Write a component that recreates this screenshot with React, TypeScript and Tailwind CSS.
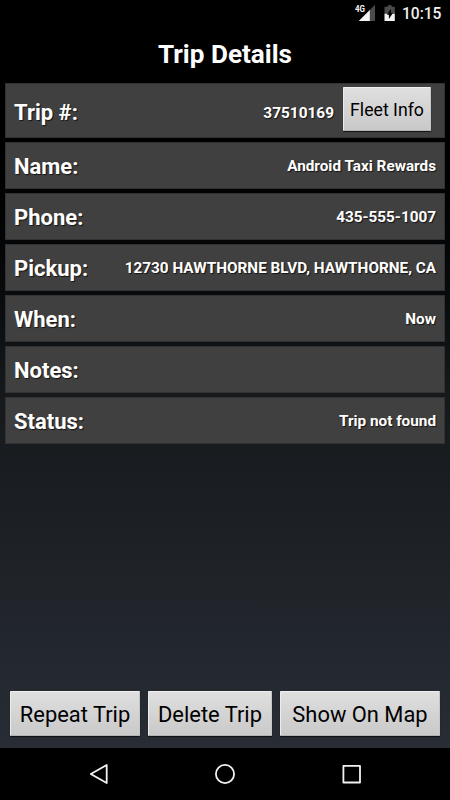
import type { ReactNode } from 'react';

interface DetailRow {
  label: string;
  value: string;
}

const rows: DetailRow[] = [
  { label: 'Name:', value: 'Android Taxi Rewards' },
  { label: 'Phone:', value: '435-555-1007' },
  { label: 'Pickup:', value: '12730 HAWTHORNE BLVD, HAWTHORNE, CA' },
  { label: 'When:', value: 'Now' },
  { label: 'Notes:', value: '' },
  { label: 'Status:', value: 'Trip not found' },
];

function StatusBar() {
  return (
    <div className="flex h-7 shrink-0 items-center justify-end pr-[8.5px]">
      <svg width="22" height="20" viewBox="0 0 22 20" className="mr-[7px]">
        <path d="M20 .8V17H3.8z" fill="#4b4b4b" />
        <path d="M14.8 6V17H3.8z" fill="#f4f4f4" />
        <path d="M0 0H11.2V9.5H0z" fill="#000" />
        <text x="0" y="8.3" fontSize="9" fontWeight="700" textLength="10" lengthAdjust="spacingAndGlyphs" fontFamily="Roboto, sans-serif" fill="#f4f4f4">
          4G
        </text>
      </svg>
      <svg width="12" height="18" viewBox="0 0 12 18" className="mr-[6px]">
        <path d="M3.7 .2h4v1.6H10.8V9H.5V1.8h3.2z" fill="#4b4b4b" />
        <path d="M.5 8.8H10.8V16H.5z" fill="#f4f4f4" />
        <path d="M6.9 3.8v4.3h2L4.9 14v-4.3h-2z" fill="#000" />
      </svg>
      <span className="pt-0.5 text-[15.6px] leading-none font-medium text-[#f0f0f0]">10:15</span>
    </div>
  );
}

function Row({ label, children }: { label: string; children?: ReactNode }) {
  return (
    <div className="flex h-[47px] items-center justify-between border border-[#323232] bg-[#404040] pt-0.5 pr-2 pl-2">
      <span className="text-[22px] font-bold [text-shadow:1px_1px_1px_#000000b0]">{label}</span>
      <span className="text-[15.3px] font-bold [text-shadow:1px_1px_1px_#000000b0]">{children}</span>
    </div>
  );
}

function ActionButton({ className, children }: { className: string; children: ReactNode }) {
  return (
    <button
      className={`shrink-0 rounded-[1px] border border-t-[#f0f0f0] border-r-[#c6c6c6] border-b-[#b2b2b2] border-l-[#ececec] bg-linear-to-b from-[#dfdfdf] to-[#c9c9c9] whitespace-nowrap text-black shadow-[0_1px_1px_#000000b0] ${className}`}
    >
      {children}
    </button>
  );
}

function NavBar() {
  return (
    <div className="flex h-[52px] shrink-0 items-center justify-center bg-black">
      <svg width="280" height="24" viewBox="0 0 280 24" fill="none" stroke="#f2f2f2" strokeWidth="1.8" strokeLinejoin="round">
        <path d="M5.8 12L21.7 3V21z" />
        <circle cx="140" cy="12" r="9.1" />
        <rect x="258.4" y="3.9" width="16.6" height="16.6" />
      </svg>
    </div>
  );
}

export default function App() {
  return (
    <div className="flex h-[800px] w-[450px] flex-col overflow-hidden bg-black font-[Roboto,sans-serif] text-white">
      <div className="flex min-h-0 flex-1 flex-col bg-linear-to-b from-black from-10% via-[#15191c] via-52% to-[#282d35]">
        <StatusBar />
        <h1 className="flex h-[55px] shrink-0 items-center justify-center pb-0.5 text-[26.1px] font-bold">Trip Details</h1>

        <div className="flex flex-1 flex-col gap-1 px-[5px]">
          {/* Trip number row */}
          <div className="flex h-[55px] items-center border border-[#323232] bg-[#404040] pr-[13px] pl-2">
            <span className="flex-1 pt-1 text-[22px] font-bold [text-shadow:1px_1px_1px_#000000b0]">Trip #:</span>
            <span className="pt-[6px] pr-[9px] text-[15.4px] font-bold [text-shadow:1px_1px_1px_#000000b0]">37510169</span>
            <ActionButton className="mb-[3px] h-11 w-[88px] pt-0.5 text-[17.7px]">Fleet Info</ActionButton>
          </div>

          {rows.map((row) => (
            <Row key={row.label} label={row.label}>
              {row.value}
            </Row>
          ))}
        </div>

        {/* Actions */}
        <div className="flex shrink-0 gap-2 pb-3 pl-[10px]">
          <ActionButton className="h-[45px] w-[130px] pt-[3px] text-[21.9px]">Repeat Trip</ActionButton>
          <ActionButton className="h-[45px] w-[124px] pt-[3px] text-[21.9px]">Delete Trip</ActionButton>
          <ActionButton className="h-[45px] w-[160px] pt-[3px] text-[21.9px]">Show On Map</ActionButton>
        </div>
      </div>
      <NavBar />
    </div>
  );
}
